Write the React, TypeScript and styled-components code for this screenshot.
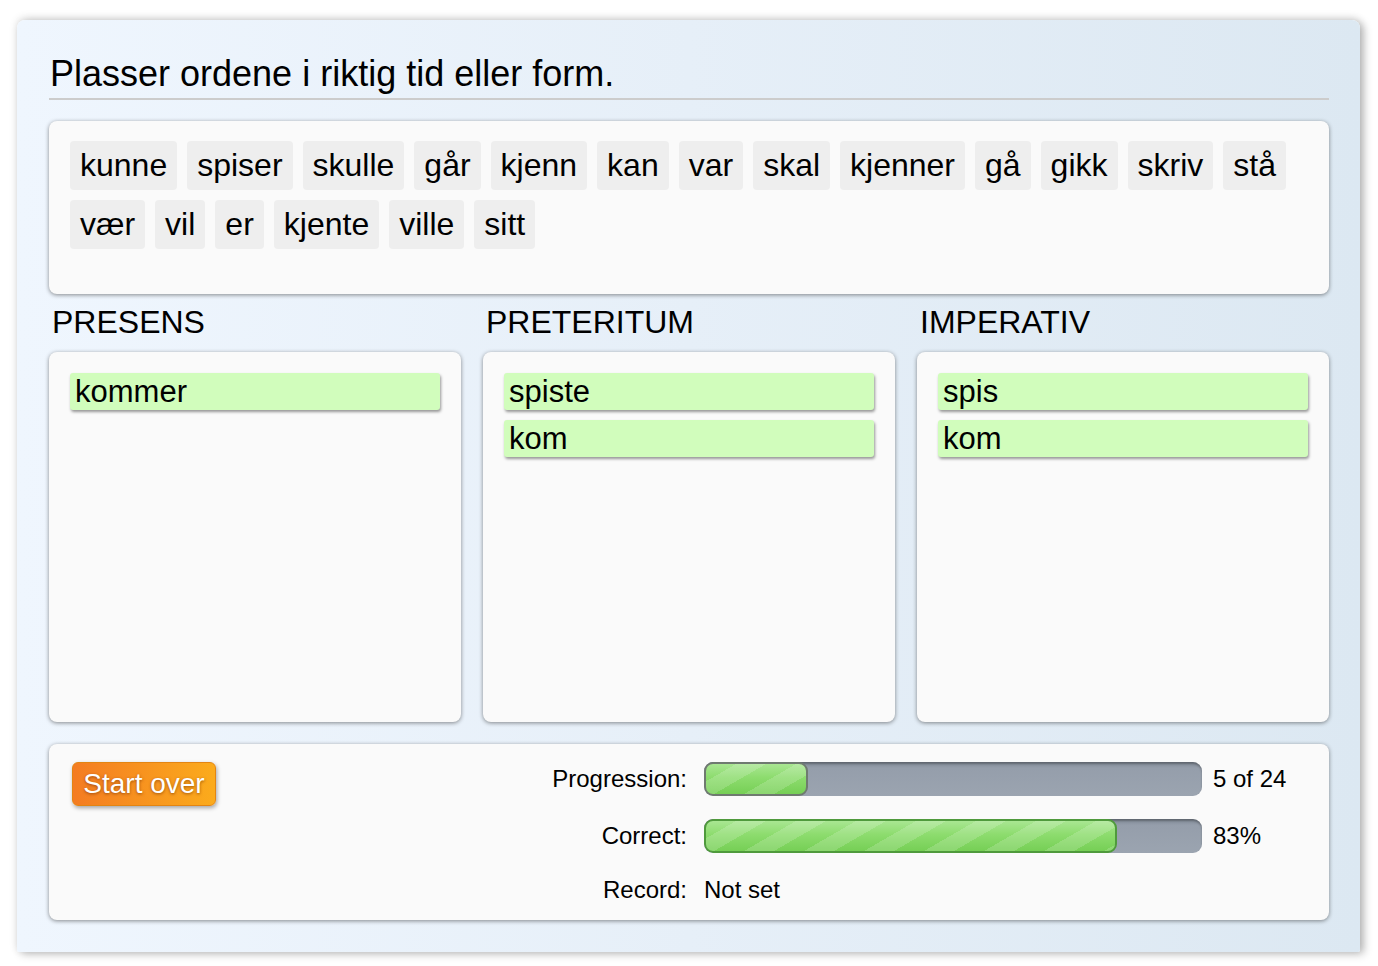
import React from 'react';
import styled, { createGlobalStyle } from 'styled-components';

const GlobalStyle = createGlobalStyle`
  html, body {
    margin: 0;
    padding: 0;
    background: #ffffff;
    font-family: 'Liberation Sans', Arial, Helvetica, sans-serif;
    color: #000;
  }
`;

const Page = styled.div`
  padding: 20px 18px 15px 17px;
`;

const Frame = styled.div`
  background: linear-gradient(to right, #eff6fe 0%, #e6eff8 50%, #dce8f2 100%);
  border-radius: 8px 8px 2px 2px;
  box-shadow: 0 -2px 8px rgba(0, 0, 0, 0.12), 4px 2px 8px rgba(0, 0, 0, 0.25);
  padding: 34px 31px 32px 32px;
`;

const Title = styled.h1`
  margin: 0 0 21px;
  padding: 0 0 4px 1px;
  font-size: 36px;
  font-weight: normal;
  line-height: 40px;
  border-bottom: 2px solid #cccccc;
`;

const Panel = styled.div`
  background: #fafafa;
  border-radius: 8px;
  box-shadow: 0 1px 4px rgba(0, 0, 0, 0.45);
`;

const WordBank = styled(Panel)`
  display: flex;
  flex-wrap: wrap;
  align-content: flex-start;
  gap: 10px;
  padding: 20px 21px;
  height: 173px;
  box-sizing: border-box;
`;

const Chip = styled.span`
  display: inline-block;
  background: #eeeeee;
  border-radius: 4px;
  padding: 7px 10px;
  font-size: 32px;
  line-height: 35px;
`;

const Columns = styled.div`
  display: grid;
  grid-template-columns: repeat(3, 1fr);
  column-gap: 22px;
  margin-top: 10px;
`;

const Column = styled.div`
  display: flex;
  flex-direction: column;
`;

const ColumnTitle = styled.h2`
  margin: 0 0 12px;
  padding-left: 3px;
  font-size: 32px;
  font-weight: normal;
  line-height: 36px;
`;

const DropZone = styled(Panel)`
  height: 370px;
  box-sizing: border-box;
  padding: 21px;
  display: flex;
  flex-direction: column;
  gap: 10px;
`;

const Answer = styled.div`
  background: #d1fdbc;
  border-radius: 3px;
  box-shadow: 1px 2px 3px rgba(0, 0, 0, 0.4);
  padding: 0 5px;
  height: 37px;
  font-size: 31px;
  line-height: 37px;
`;

const Footer = styled(Panel)`
  margin-top: 22px;
  display: flex;
  align-items: flex-start;
  justify-content: space-between;
  padding: 18px 20px 16px 23px;
`;

const StartButton = styled.button`
  font-family: inherit;
  font-size: 28px;
  color: #ffffff;
  text-shadow: 0 1px 3px rgba(120, 50, 0, 0.7);
  background: linear-gradient(to right, #f47c22, #fbab1c);
  border: 1px solid #e38512;
  border-radius: 6px;
  box-shadow: 1px 2px 4px rgba(0, 0, 0, 0.35);
  padding: 0 8px;
  height: 44px;
  width: 144px;
  cursor: pointer;
`;

const Stats = styled.div`
  display: grid;
  grid-template-columns: auto 498px 107px;
  align-items: center;
  row-gap: 23px;
  font-size: 24px;
`;

const Label = styled.div`
  text-align: right;
  padding-right: 17px;
`;

const Value = styled.div<{ $flush?: boolean }>`
  padding-left: ${(p) => (p.$flush ? '0' : '11px')};
`;

const Track = styled.div`
  height: 34px;
  border-radius: 9px;
  background: linear-gradient(to bottom, #7f8894 0%, #959eab 18%, #9ba4b0 100%);
  box-shadow: inset 0 2px 2px rgba(0, 0, 0, 0.25);
  overflow: hidden;
`;

const Fill = styled.div<{ $border: string }>`
  height: 100%;
  box-sizing: border-box;
  border: 2px solid ${(p) => p.$border};
  border-radius: 9px;
  background:
    repeating-linear-gradient(150deg, rgba(255, 255, 255, 0) 0 15px, rgba(255, 255, 255, 0.16) 15px 30px),
    linear-gradient(to bottom, #a9e692 0%, #8ddc6e 45%, #76cf55 100%);
`;

const Bar = ({ value, border }: { value: number; border: string }) => (
  <Track>
    <Fill $border={border} style={{ width: `${value * 100}%` }} />
  </Track>
);

const words = [
  'kunne', 'spiser', 'skulle', 'går', 'kjenn', 'kan', 'var', 'skal', 'kjenner', 'gå',
  'gikk', 'skriv', 'stå', 'vær', 'vil', 'er', 'kjente', 'ville', 'sitt',
];

const columns = [
  { title: 'PRESENS', items: ['kommer'] },
  { title: 'PRETERITUM', items: ['spiste', 'kom'] },
  { title: 'IMPERATIV', items: ['spis', 'kom'] },
];

const App = () => {
  return (
    <Page>
      <GlobalStyle />
      <Frame>
        <Title>Plasser ordene i riktig tid eller form.</Title>
        <WordBank>
          {words.map((w) => (
            <Chip key={w}>{w}</Chip>
          ))}
        </WordBank>
        <Columns>
          {columns.map((c) => (
            <Column key={c.title}>
              <ColumnTitle>{c.title}</ColumnTitle>
              <DropZone>
                {c.items.map((i) => (
                  <Answer key={i}>{i}</Answer>
                ))}
              </DropZone>
            </Column>
          ))}
        </Columns>
        <Footer>
          <StartButton>Start over</StartButton>
          <Stats>
            <Label>Progression:</Label>
            <Bar value={5 / 24} border="#6f7a70" />
            <Value>5 of 24</Value>
            <Label>Correct:</Label>
            <Bar value={0.83} border="#4f9a3c" />
            <Value>83%</Value>
            <Label>Record:</Label>
            <Value $flush>Not set</Value>
            <div />
          </Stats>
        </Footer>
      </Frame>
    </Page>
  );
};

export default App;
